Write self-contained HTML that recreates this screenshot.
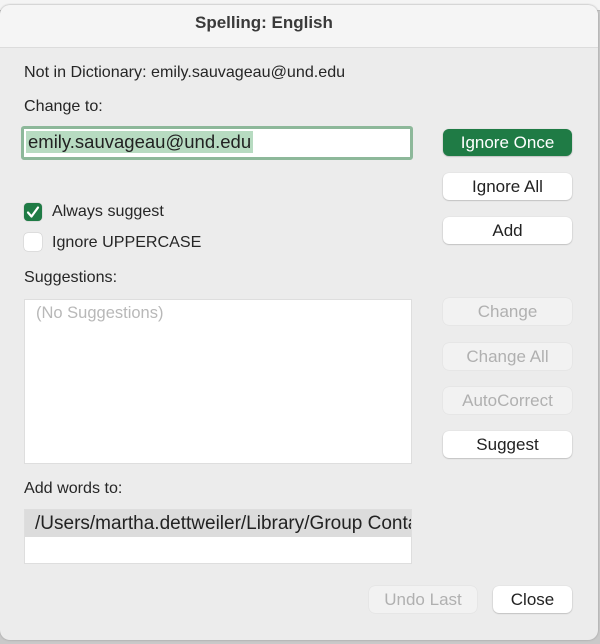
<!DOCTYPE html><html><head><style>
body{margin:0;width:600px;height:644px;background:#c9c9c9;font-family:"Liberation Sans",sans-serif;position:relative;overflow:hidden}
.top{position:absolute;left:0;top:0;width:600px;height:10px;background:#f4f4f4;border-bottom:1px solid #bbb}
.dlg{position:absolute;left:0;top:5px;width:598px;height:635px;background:#ececec;border-radius:10px;overflow:hidden;box-shadow:0 0 2px #999}
.title{height:42px;background:#f5f5f5;border-bottom:1px solid #dcdcdc;line-height:36px;font-weight:bold;font-size:17px;color:#3a3a3a;padding-left:195px}
.a{position:absolute;font-size:16.1px;color:#262626;white-space:nowrap}
.btn{position:absolute;left:443px;width:129px;height:27px;background:#fff;border-radius:6px;box-shadow:0 0.5px 1.5px rgba(0,0,0,.3);text-align:center;line-height:27px;font-size:17px;color:#222}
.dis{background:#f2f2f2;color:#b0b0b0;box-shadow:0 0 1px rgba(0,0,0,.15)}
.box{position:absolute;left:24px;width:386px;background:#fff;border:1px solid #dedede}
.cb{position:absolute;left:24px;width:18px;height:18px;border-radius:4px;background:#fff;box-shadow:0 0 1px rgba(0,0,0,.4)}
</style></head><body>
<div class="top"></div>
<div class="dlg">
<div class="title">Spelling: English</div>
</div>
<div class="a" style="left:24px;top:63px">Not in Dictionary: emily.sauvageau@und.edu</div>
<div class="a" style="left:24px;top:97px">Change to:</div>
<div style="position:absolute;left:21px;top:126px;width:386px;height:28px;background:#fff;border:3px solid #8db89a;border-radius:3px"></div>
<div style="position:absolute;left:26px;top:131px;height:22px;padding:0 2px;background:#b7dbc1;font-size:18.5px;line-height:22px;color:#222">emily.sauvageau@und.edu</div>
<div class="btn" style="top:129px;background:#1f7b45;color:#fff">Ignore Once</div>
<div class="btn" style="top:173px">Ignore All</div>
<div class="btn" style="top:217px">Add</div>
<div class="cb" style="top:203px;background:#1f7b45"><svg width="18" height="18"><path d="M4 9.5l3.5 4L14 4.5" stroke="#fff" stroke-width="2.2" fill="none" stroke-linecap="round" stroke-linejoin="round"/></svg></div>
<div class="a" style="left:52px;top:202px">Always suggest</div>
<div class="cb" style="top:233px"></div>
<div class="a" style="left:52px;top:233px">Ignore UPPERCASE</div>
<div class="a" style="left:24px;top:268px">Suggestions:</div>
<div class="box" style="top:299px;height:163px"><div style="padding:4px 11px;font-size:16.5px;color:#b8b8b8">(No Suggestions)</div></div>
<div class="btn dis" style="top:298px">Change</div>
<div class="btn dis" style="top:343px">Change All</div>
<div class="btn dis" style="top:387px">AutoCorrect</div>
<div class="btn" style="top:431px">Suggest</div>
<div class="a" style="left:24px;top:479px">Add words to:</div>
<div class="box" style="top:509px;height:53px;overflow:hidden"><div style="background:#dcdcdc;height:27px;line-height:27px;padding-left:10px;font-size:19px;color:#222;white-space:nowrap">/Users/martha.dettweiler/Library/Group Containers</div></div>
<div class="btn dis" style="left:369px;width:108px;top:586px">Undo Last</div>
<div class="btn" style="left:493px;width:79px;top:586px">Close</div>
</body></html>
